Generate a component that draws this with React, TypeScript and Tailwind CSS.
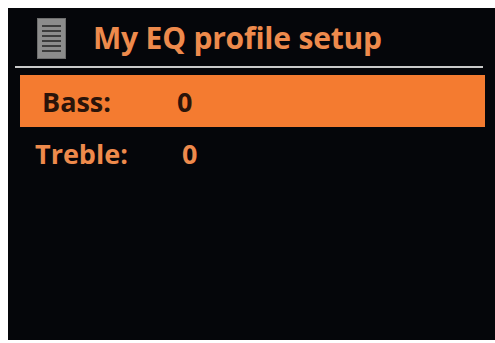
import React from "react";

const font = { fontFamily: '"Open Sans", "DejaVu Sans", sans-serif' };

// simple list glyph drawn in the header
function MenuIcon() {
  return (
    <svg width="29" height="41" viewBox="0 0 29 41" className="shrink-0">
      <rect x="0" y="0" width="29" height="41" fill="#8c8c8c" />
      <rect x="0.5" y="0.5" width="28" height="40" fill="none" stroke="#6e6e6e" />
      {[7, 12, 17, 22, 27, 32].map((y) => (
        <rect key={y} x="5" y={y} width="19" height="2" fill="#3c3c3c" />
      ))}
    </svg>
  );
}

export default function App() {
  const rows = [
    { label: "Bass:", value: "0", active: true },
    { label: "Treble:", value: "0", active: false },
  ];

  return (
    <div className="w-[495px] h-[343px] bg-white pl-[8px] pt-[8px] overflow-hidden" style={font}>
      <div className="h-[332px] bg-[#05060a] flex flex-col">
        {/* header */}
        <div className="flex items-center h-[58px] pl-[29px] pt-[2px]">
          <MenuIcon />
          <span className="ml-[27px] text-[30px] font-bold text-[#ee8a4c] leading-none tracking-[-0.2px]">
            My EQ profile setup
          </span>
        </div>
        <div className="ml-[7px] mr-[12px] h-[2px] bg-[#c9c9c9]" />

        {/* rows */}
        <div className="mt-[7px] flex flex-col">
          {rows.map((r) => (
            <div
              key={r.label}
              className={`ml-[12px] mr-[10px] h-[52px] flex items-center text-[27px] font-bold leading-none ${
                r.active ? "bg-[#f47b30] text-[#2a140a]" : "text-[#ee8a4c]"
              }`}
            >
              <span className={r.active ? "ml-[22px] w-[135px]" : "ml-[15px] w-[147px]"}>{r.label}</span>
              <span>{r.value}</span>
            </div>
          ))}
        </div>
      </div>
    </div>
  );
}
